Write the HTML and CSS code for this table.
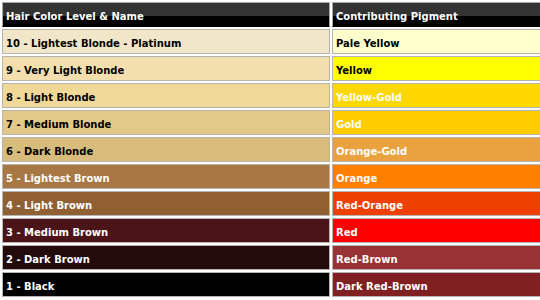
FILE: index.html
```html
<!DOCTYPE html>
<html>
<head>
<meta charset="utf-8">
<link rel="stylesheet" href="styles.css">
</head>
<body>
<table class="chart">
  <colgroup><col class="c-level"><col class="c-pig"></colgroup>
  <thead>
    <tr><th>Hair Color Level &amp; Name</th><th>Contributing Pigment</th></tr>
  </thead>
  <tbody>
    <tr><td class="l10">10 - Lightest Blonde - Platinum</td><td class="p10">Pale Yellow</td></tr>
    <tr><td class="l9">9 - Very Light Blonde</td><td class="p9">Yellow</td></tr>
    <tr><td class="l8">8 - Light Blonde</td><td class="p8">Yellow-Gold</td></tr>
    <tr><td class="l7">7 - Medium Blonde</td><td class="p7">Gold</td></tr>
    <tr><td class="l6">6 - Dark Blonde</td><td class="p6">Orange-Gold</td></tr>
    <tr><td class="l5">5 - Lightest Brown</td><td class="p5">Orange</td></tr>
    <tr><td class="l4">4 - Light Brown</td><td class="p4">Red-Orange</td></tr>
    <tr><td class="l3">3 - Medium Brown</td><td class="p3">Red</td></tr>
    <tr><td class="l2">2 - Dark Brown</td><td class="p2">Red-Brown</td></tr>
    <tr><td class="l1">1 - Black</td><td class="p1">Dark Red-Brown</td></tr>
  </tbody>
</table>
</body>
</html>
```

FILE: styles.css
```css
html, body {
  margin: 0;
  padding: 0;
  background: #ffffff;
  overflow: hidden;
}
body {
  width: 540px;
  height: 300px;
}
.chart {
  border-collapse: separate;
  border-spacing: 2px;
  table-layout: fixed;
  width: 549px;
  font-family: "DejaVu Sans", Verdana, sans-serif;
  font-size: 10px;
  font-weight: bold;
}
.c-level { width: 328px; }
.c-pig { width: 215px; }
.chart th,
.chart td {
  box-sizing: border-box;
  height: 25px;
  border: 1px solid #b4b4b4;
  padding: 4px 3px 0 3px;
  text-align: left;
  vertical-align: middle;
  white-space: nowrap;
  overflow: hidden;
  color: #000000;
  line-height: 13px;
}
.chart th {
  color: #ffffff;
  background: linear-gradient(#333333 0, #333333 56%, #000000 56%, #000000 100%);
  border-color: #a8a8a8 #a8a8a8 #000000 #a8a8a8;
}
.l10 { background: #f2e6c9; }
.l9 { background: #f3dfae; }
.l8 { background: #efd898; }
.l7 { background: #e2c98a; }
.l6 { background: #d7bc7c; }
.l5 { background: #a87844; color: #ffffff !important; }
.l4 { background: #906033; color: #ffffff !important; }
.l3 { background: #4a1418; color: #ffffff !important; }
.l2 { background: #230a0b; color: #ffffff !important; }
.l1 { background: #000000; color: #ffffff !important; }
.p10 { background: #ffffcc; }
.p9 { background: #ffff00; }
.p8 { background: #ffd700; color: #ffffff !important; }
.p7 { background: #ffcc00; color: #ffffff !important; }
.p6 { background: #e9a23e; color: #ffffff !important; }
.p5 { background: #ff7f00; color: #ffffff !important; }
.p4 { background: #ee4000; color: #ffffff !important; }
.p3 { background: #ff0000; color: #ffffff !important; }
.p2 { background: #993333; color: #ffffff !important; }
.p1 { background: #802020; color: #ffffff !important; }
```
